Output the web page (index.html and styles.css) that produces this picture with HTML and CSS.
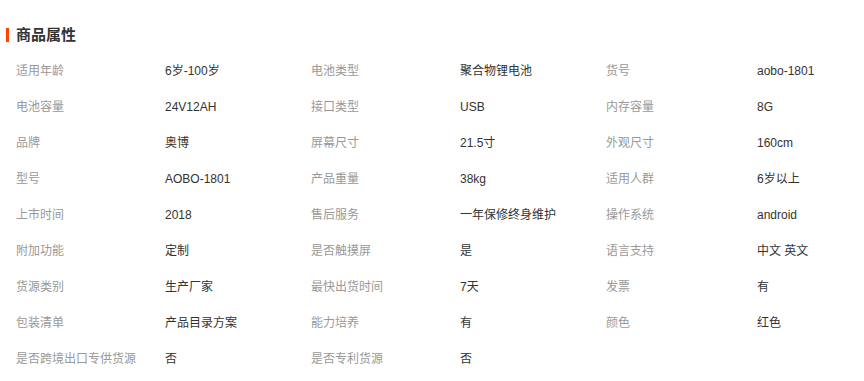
FILE: index.html
```html
<!DOCTYPE html>
<html lang="zh">
<head>
<meta charset="utf-8">
<link rel="stylesheet" href="styles.css">
</head>
<body>
<div class="attrs">
  <h3 class="title"><span class="bar"></span>商品属性</h3>
  <div class="grid">
    <div class="k">适用年龄</div><div class="v">6岁-100岁</div>
    <div class="k">电池类型</div><div class="v">聚合物锂电池</div>
    <div class="k">货号</div><div class="v">aobo-1801</div>

    <div class="k">电池容量</div><div class="v">24V12AH</div>
    <div class="k">接口类型</div><div class="v">USB</div>
    <div class="k">内存容量</div><div class="v">8G</div>

    <div class="k">品牌</div><div class="v">奥博</div>
    <div class="k">屏幕尺寸</div><div class="v">21.5寸</div>
    <div class="k">外观尺寸</div><div class="v">160cm</div>

    <div class="k">型号</div><div class="v">AOBO-1801</div>
    <div class="k">产品重量</div><div class="v">38kg</div>
    <div class="k">适用人群</div><div class="v">6岁以上</div>

    <div class="k">上市时间</div><div class="v">2018</div>
    <div class="k">售后服务</div><div class="v">一年保修终身维护</div>
    <div class="k">操作系统</div><div class="v">android</div>

    <div class="k">附加功能</div><div class="v">定制</div>
    <div class="k">是否触摸屏</div><div class="v">是</div>
    <div class="k">语言支持</div><div class="v">中文 英文</div>

    <div class="k">货源类别</div><div class="v">生产厂家</div>
    <div class="k">最快出货时间</div><div class="v">7天</div>
    <div class="k">发票</div><div class="v">有</div>

    <div class="k">包装清单</div><div class="v">产品目录方案</div>
    <div class="k">能力培养</div><div class="v">有</div>
    <div class="k">颜色</div><div class="v">红色</div>

    <div class="k">是否跨境出口专供货源</div><div class="v">否</div>
    <div class="k">是否专利货源</div><div class="v">否</div>
  </div>
</div>
</body>
</html>
```
FILE: styles.css
```css
html, body {
  margin: 0;
  padding: 0;
  background: #fff;
}
body {
  font-family: "Liberation Sans", "Noto Sans CJK SC", sans-serif;
  font-size: 12px;
  color: #333;
}
.attrs {
  padding: 26px 0 0 6px;
}
.title {
  margin: 0;
  display: flex;
  align-items: center;
  height: 18px;
  font-size: 15px;
  font-weight: bold;
  color: #333;
  line-height: 18px;
}
.bar {
  width: 3px;
  height: 14px;
  background: #ff4400;
  margin-right: 7px;
}
.grid {
  margin-top: 9px;
  padding-left: 10px;
  display: grid;
  grid-template-columns: 149px 146px 149px 146px 151px 1fr;
  grid-auto-rows: 36px;
}
.k,
.v {
  line-height: 36px;
  height: 36px;
  white-space: nowrap;
}
.k {
  color: #999;
}
.v {
  color: #333;
}
```
